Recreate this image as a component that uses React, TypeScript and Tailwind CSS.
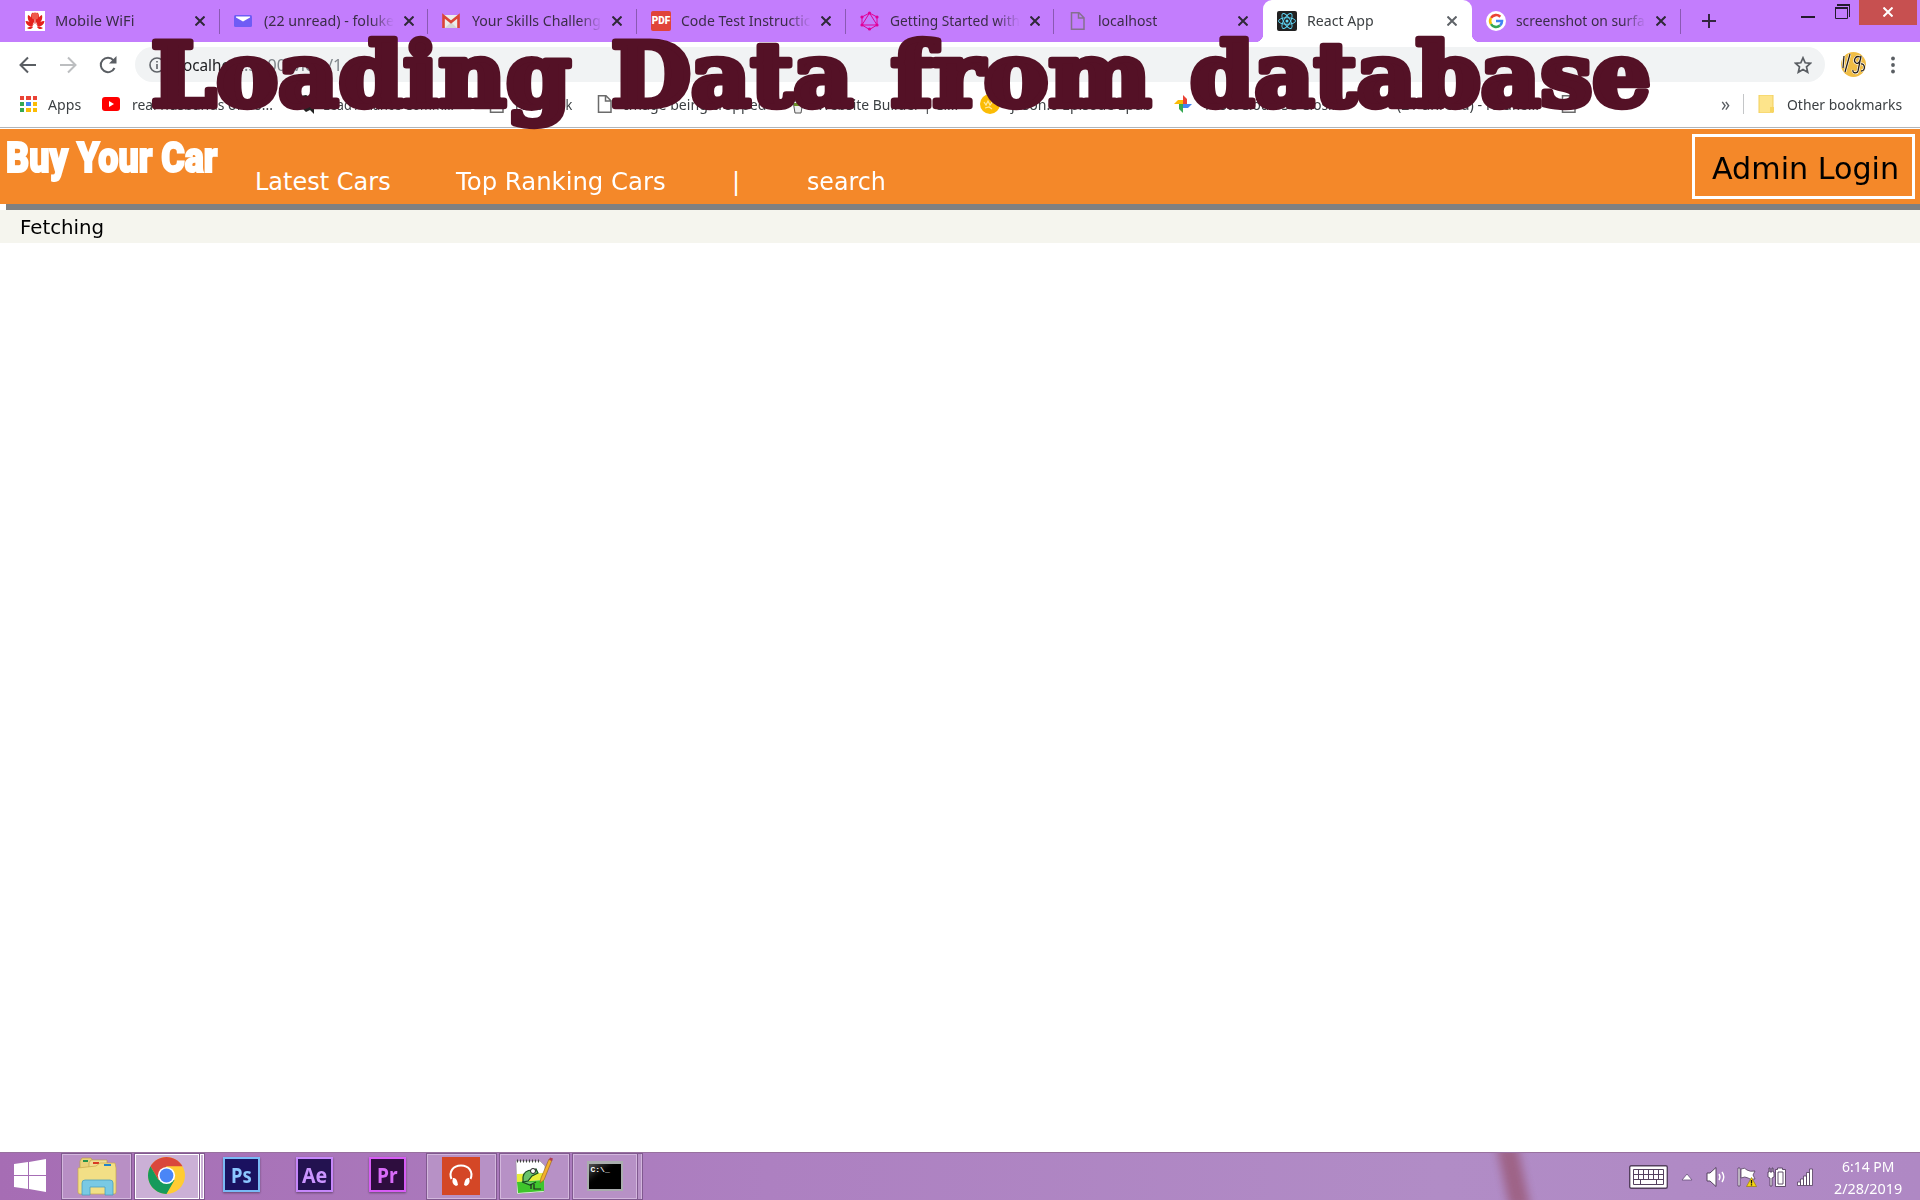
import React, { useLayoutEffect, useRef, useState } from "react";

type FitProps = { w: number; className?: string; children: string };

/* Single-line text stretched to a fixed measure. */
function Fit({ w, className = "", children }: FitProps) {
  const ref = useRef<HTMLSpanElement>(null);
  const [scale, setScale] = useState(1);
  useLayoutEffect(() => {
    if (ref.current) setScale(w / ref.current.offsetWidth);
  }, [w]);
  return (
    <span className="block shrink-0" style={{ width: w }}>
      <span
        ref={ref}
        className={`inline-block origin-left whitespace-pre ${className}`}
        style={{ transform: `scaleX(${scale})` }}
      >
        {children}
      </span>
    </span>
  );
}

const Huawei = () => (
  <svg viewBox="0 0 20 20" className="size-5 bg-white" fill="#e3211c">
    <path d="M9.500 13C6 9 5 5 7 2c2-1 3 3 2.500 11zM10.500 13c3.500-4 4.500-8 2.500-11-2-1-3 3-2.500 11zM8.500 14C4 12 2 8 3 4c3 1 5 5 5.500 10zM11.500 14c4.500-2 6.500-6 5.500-10-3 1-5 5-5.500 10zM8 15c-4 1-7-1-7.500-5C4 10 7 12 8 15zM12 15c4 1 7-1 7.500-5-3.500 0-6.500 2-7.500 5zM8 16c-1 2-4 3-6 1 2-1 4-2 6-1zM12 16c1 2 4 3 6 1-2-1-4-2-6-1z" />
    <ellipse cx="10" cy="5" rx="3.500" ry="3.500" fill="#ee5a4c" />
  </svg>
);
const Mail = () => (
  <svg viewBox="0 0 20 20" className="size-5">
    <rect x="0" y="4" width="18" height="12" rx="1.500" fill="#6f5cf5" />
    <path d="M2 5.500h14v1L9 10.500 2 6.500z" fill="#fff" />
  </svg>
);
const Gmail = () => (
  <svg viewBox="0 0 20 20" className="size-5">
    <path d="M1 4h16v13H1z" fill="#ececec" />
    <path d="M3 17l6-6 6 6z" fill="#d5d5d5" />
    <path d="M1.500 17V5L9 11l7.500-6v12" fill="none" stroke="#db4437" strokeWidth="2.600" />
  </svg>
);
const Pdf = () => (
  <span className="flex size-5 items-center justify-center rounded-[2px] bg-[#e0433a] font-['Roboto'] text-[10px] font-black text-white">
    PDF
  </span>
);
const GraphQL = () => (
  <svg viewBox="0 0 20 20" className="size-5" stroke="#e10098" fill="none" strokeWidth="1">
    <path d="M9.500 2L17 6v8l-7.500 4.500L2 14V6zM9.500 2L17 14H2z" />
    <g fill="#e10098" stroke="none">
      <circle cx="9.500" cy="2" r="1.600" /><circle cx="17" cy="6" r="1.600" /><circle cx="17" cy="14" r="1.600" />
      <circle cx="9.500" cy="18" r="1.600" /><circle cx="2" cy="14" r="1.600" /><circle cx="2" cy="6" r="1.600" />
    </g>
  </svg>
);
const Page = ({ c = "#6b6b6b" }: { c?: string }) => (
  <svg viewBox="0 0 20 20" className="size-5" fill="none" stroke={c} strokeWidth="1.500">
    <path d="M3.500 1.700h7.500l5 5v11.600H3.500zM10.500 2v5H16" />
  </svg>
);
const ReactLogo = () => (
  <svg viewBox="0 0 20 20" className="size-5" fill="none" stroke="#61dafb" strokeWidth=".9">
    <rect width="20" height="20" rx="2" fill="#222" stroke="none" />
    <ellipse cx="10" cy="10" rx="8.500" ry="3.300" />
    <ellipse cx="10" cy="10" rx="8.500" ry="3.300" transform="rotate(60 10 10)" />
    <ellipse cx="10" cy="10" rx="8.500" ry="3.300" transform="rotate(120 10 10)" />
    <circle cx="10" cy="10" r="1.500" fill="#61dafb" stroke="none" />
  </svg>
);
const Google = () => (
  <svg viewBox="0 0 20 20" className="size-5" fill="none" strokeWidth="2.600">
    <circle cx="10" cy="10" r="10" fill="#fff" />
    <path d="M5 6.900A6 6 0 0 1 14.300 5.800" stroke="#ea4335" />
    <path d="M5 13.100A6 6 0 0 1 5 6.900" stroke="#fbbc05" />
    <path d="M14 14.500A6 6 0 0 1 5 13.100" stroke="#34a853" />
    <path d="M10 10h6a6 6 0 0 1-2 4.500" stroke="#4285f4" />
  </svg>
);

const Close = ({ c }: { c: string }) => (
  <svg viewBox="0 0 10 10" className="size-[10px]" stroke={c} strokeWidth="2">
    <path d="M.5 .5l9 9M9.500 .5l-9 9" />
  </svg>
);

const tabs = [
  { icon: <Huawei />, title: "Mobile WiFi", w: 79 },
  { icon: <Mail />, title: "(22 unread) - foluke", w: 130, fade: true },
  { icon: <Gmail />, title: "Your Skills Challeng", w: 129, fade: true },
  { icon: <Pdf />, title: "Code Test Instructic", w: 130, fade: true },
  { icon: <GraphQL />, title: "Getting Started with", w: 130, fade: true },
  { icon: <Page c="#85708f" />, title: "localhost", w: 59 },
  { icon: <ReactLogo />, title: "React App", w: 67, active: true },
  { icon: <Google />, title: "screenshot on surfa", w: 129, fade: true },
];

function TabStrip() {
  return (
    <div className="flex h-[42px] bg-[#c37dfd] pl-[11px]">
      {tabs.map((t, i) => (
        <div
          key={t.title}
          className={`relative flex h-[42px] w-[208.700px] shrink-0 items-center pl-[14px] ${t.active ? "rounded-t-[9px] bg-white" : ""}`}
        >
          {t.icon}
          <div
            className={`ml-[10px] flex w-[130px] pb-[2px] text-[15px] ${t.active ? "text-[#3c4043]" : "text-[#3b2d48]"} ${t.fade ? "[mask-image:linear-gradient(to_right,black_82%,transparent)]" : ""}`}
          >
            <Fit w={t.w}>{t.title}</Fit>
          </div>
          <div className="ml-[10px]">
            <Close c={t.active ? "#5f6368" : "#2f2838"} />
          </div>
          {!t.active && i !== 5 && <div className="absolute right-0 top-[9px] h-[25px] w-px bg-[#8a59b3]" />}
          {t.active && (
            <>
              <div className="absolute -left-[8px] bottom-0 size-2 bg-[radial-gradient(circle_at_0_0,transparent_8px,white_8.500px)]" />
              <div className="absolute -right-[8px] bottom-0 size-2 bg-[radial-gradient(circle_at_100%_0,transparent_8px,white_8.500px)]" />
            </>
          )}
        </div>
      ))}
      <svg viewBox="0 0 14 14" className="ml-[21px] mt-[14px] size-[14px]" stroke="#33263f" strokeWidth="2">
        <path d="M7 0v14M0 7h14" />
      </svg>
      <div className="ml-auto flex">
        <div className="mr-[20px] mt-[16px] h-[2px] w-[14px] bg-[#241a2e]" />
        <svg viewBox="0 0 16 16" className="mr-[8px] mt-[3px] size-4" fill="none" stroke="#241a2e">
          <path d="M.5 4v11.500h12V4M2.500 1.500h12V14" />
          <path d="M0 5h13M2 2h13" strokeWidth="2" />
        </svg>
        <div className="mr-[3px] flex h-[25px] w-[58px] items-center justify-center bg-[#c75050] pb-[2px]">
          <svg viewBox="0 0 10 10" className="size-[10px]" stroke="#fff" strokeWidth="2">
            <path d="M.5 .5l9 9M9.500 .5l-9 9" />
          </svg>
        </div>
      </div>
    </div>
  );
}

function AddressRow() {
  return (
    <div className="flex h-[45px] items-center bg-white pl-[19px]">
      <svg viewBox="0 0 18 18" className="size-[18px]" fill="none" stroke="#5a5e63" strokeWidth="2">
        <path d="M17 9H2M9 1.500L1.500 9 9 16.500" />
      </svg>
      <svg viewBox="0 0 18 18" className="ml-[22px] size-[18px]" fill="none" stroke="#bcbec0" strokeWidth="2">
        <path d="M1 9h15M9 1.500L16.500 9 9 16.500" />
      </svg>
      <svg viewBox="0 0 18 18" className="ml-[22px] size-[18px]" fill="none" stroke="#5a5e63" strokeWidth="2">
        <path d="M15.500 12A7.200 7.200 0 1 1 14.500 4.300" />
        <path d="M17.500 0v7.500H10z" fill="#5a5e63" stroke="none" />
      </svg>
      <div className="ml-[18px] flex h-[35px] w-[1690px] items-center rounded-full bg-[#f1f3f4] pl-[14px] pr-[13px]">
        <svg viewBox="0 0 16 16" className="size-4" fill="none" stroke="#5f6368" strokeWidth="1.600">
          <circle cx="8" cy="8" r="7" />
          <path d="M8 7v5M8 4v1.600" />
        </svg>
        <div className="ml-[14px] flex text-[16px]">
          <Fit w={65} className="text-[#202124]">localhost</Fit>
          <Fit w={99} className="text-[#80868b]">:3000/view/1</Fit>
        </div>
        <svg viewBox="0 0 18 18" className="ml-auto size-[18px]" fill="none" stroke="#5a5e63" strokeWidth="1.700">
          <path d="M9 1.800l2.200 5 5.300.5-4 3.600 1.200 5.300L9 13.400l-4.700 2.800 1.200-5.300-4-3.600 5.300-.5z" />
        </svg>
      </div>
      <svg viewBox="0 0 25 25" className="ml-[16px] size-[25px]">
        <circle cx="12.500" cy="12.500" r="12.500" fill="#f0bd45" />
        <path d="M3 4l-1 12M9 2L4 20M19 5c-5-2-7 4-4 6s5-4 5-7l-3 15c-1 3-6 2-5-1M20 12c4-1 5 7 0 7" fill="none" stroke="#fff" strokeWidth="2.600" />
        <path d="M3 4l-1 12M9 2L4 20M19 5c-5-2-7 4-4 6s5-4 5-7l-3 15c-1 3-6 2-5-1M20 12c4-1 5 7 0 7" fill="none" stroke="#2a2013" strokeWidth="1.300" />
      </svg>
      <svg viewBox="0 0 4 18" className="ml-[25px] h-[18px] w-1" fill="#5a5e63">
        <circle cx="2" cy="2.500" r="1.900" /><circle cx="2" cy="9" r="1.900" /><circle cx="2" cy="15.500" r="1.900" />
      </svg>
    </div>
  );
}

const appColors = ["bg-[#ea4335]", "bg-[#ea4335]", "bg-[#ea4335]", "bg-[#34a853]", "bg-[#4285f4]", "bg-[#fbbc05]", "bg-[#34a853]", "bg-[#fbbc05]", "bg-[#fbbc05]"];

function Bookmarks() {
  return (
    <div className="flex h-[40px] items-center bg-white pb-[6px] pl-[20px] text-[15px] text-[#3c4043]">
      <div className="grid grid-cols-3 gap-[2px]">
        {appColors.map((c, i) => <div key={i} className={`size-[4.300px] ${c}`} />)}
      </div>
      <div className="ml-[11px]"><Fit w={33}>Apps</Fit></div>
      <svg viewBox="0 0 18 14" className="ml-[21px] h-[14px] w-[18px]">
        <rect width="18" height="14" rx="3" fill="#f00" /><path d="M7 4l5 3-5 3z" fill="#fff" />
      </svg>
      <div className="ml-[12px]"><Fit w={141}>real husbands of ho...</Fit></div>
      <svg viewBox="0 0 20 20" className="ml-[25px] size-5" fill="#222"><path d="M2 2l6-1 6 3 2 6 0 10-4-4-4 2-3-3-4-1 3-3z" /></svg>
      <div className="ml-[5px]"><Fit w={131}>Lead Alliance Comm...</Fit></div>
      <div className="ml-[33px]"><Page /></div>
      <div className="ml-[8px]"><Fit w={57}>Facebook</Fit></div>
      <div className="ml-[23px]"><Page /></div>
      <div className="ml-[9px]"><Fit w={142}>Image being cropped</Fit></div>
      <svg viewBox="0 0 20 20" className="ml-[22px] size-5">
        <path d="M8 0h6v6H8z" fill="#f3a35b" /><path d="M5 7h10l-2 12H7z" fill="#eee" stroke="#555" /><path d="M6 9h8v3H6z" fill="#6b8f2a" />
      </svg>
      <div className="ml-[9px]"><Fit w={141}>Website Builder | Cr...</Fit></div>
      <svg viewBox="0 0 20 20" className="ml-[22px] size-5">
        <circle cx="10" cy="10" r="10" fill="#fbbc05" /><path d="M4 8l2 3 2-4 2 4 3-4 3 3M5 14l4-1 3 2" fill="none" stroke="#ffe9a0" strokeWidth="1.200" />
      </svg>
      <div className="ml-[11px]"><Fit w={141}>jason.0 Episode Epub</Fit></div>
      <svg viewBox="0 0 20 20" className="ml-[21px] size-5">
        <path d="M10 10V1l4 4v5z" fill="#ea4335" /><path d="M10 10h9l-4 4h-5z" fill="#4285f4" />
        <path d="M10 10v9l-4-4v-5z" fill="#34a853" /><path d="M10 10H1l4-4h5z" fill="#fbbc05" />
      </svg>
      <div className="ml-[12px]"><Fit w={138}>ProtoCloud SC Closi...</Fit></div>
      <svg viewBox="0 0 20 20" className="ml-[23px] size-5"><rect x="1" y="4" width="18" height="8" rx="2" fill="#6f5cf5" /></svg>
      <div className="ml-[11px]"><Fit w={142}>(21 unread) - foluke...</Fit></div>
      <div className="ml-[20px]"><Page /></div>
      <div className="ml-auto text-[20px] leading-none text-[#5a5e63]"><Fit w={9}>»</Fit></div>
      <div className="ml-[13px] h-5 w-px bg-[#c4c6c8]" />
      <svg viewBox="0 0 16 18" className="ml-[14px] h-[18px] w-4"><path d="M1 0h14v18H1z" fill="#fde48b" stroke="#f2cf5b" /><path d="M12 12h4v5h-4z" fill="#f7d560" /></svg>
      <div className="ml-[13px] mr-[18px]"><Fit w={115}>Other bookmarks</Fit></div>
    </div>
  );
}

const words = [
  { text: "Loading", x: 151, w: 420 },
  { text: "Data", x: 611, w: 242 },
  { text: "from", x: 891, w: 260 },
  { text: "database", x: 1190, w: 461 },
];

/* Slab lettering; the rounded outline softens the serifs. */
function Headline() {
  return (
    <svg
      viewBox="0 0 1920 140"
      className="pointer-events-none absolute left-0 top-0 h-[140px] w-[1920px] font-['DejaVu_Serif'] text-[88px] font-bold"
      fill="#541126"
      stroke="#541126"
      strokeWidth="6.500"
      strokeLinejoin="round"
    >
      {words.map((k) => (
        <text key={k.text} x={k.x} y="106" textLength={k.w} lengthAdjust="spacingAndGlyphs">
          {k.text}
        </text>
      ))}
    </svg>
  );
}

function SiteHeader() {
  return (
    <header className="font-['DejaVu_Sans']">
      <div className="flex h-[75px] bg-[#f48829]">
        <div className="ml-[6px] h-[50px] font-['Roboto'] text-[43px] font-black leading-[56px] text-white [-webkit-text-stroke:2px_white]">
          <Fit w={211}>Buy Your Car</Fit>
        </div>
        <nav className="flex pt-[38px] text-[24px] leading-[30px] text-white">
          <div className="ml-[38px]"><Fit w={136}>Latest Cars</Fit></div>
          <div className="ml-[65px]"><Fit w={210}>Top Ranking Cars</Fit></div>
          <div className="ml-[66px]"><Fit w={8}>|</Fit></div>
          <div className="ml-[67px]"><Fit w={79}>search</Fit></div>
        </nav>
        <button className="ml-auto mr-[5px] mt-[5px] flex h-[65px] w-[223px] items-center justify-center border-[3px] border-white pl-[4px] pt-[4px] text-[30px] text-black">
          <Fit w={187}>Admin Login</Fit>
        </button>
      </div>
      <div className="ml-[6px] h-[6px] bg-[#808080]" />
      <div className="h-[33px] bg-[#f5f5ee] pl-[20px] pt-px text-[20px] leading-[33px] text-black">
        <Fit w={84}>Fetching</Fit>
      </div>
    </header>
  );
}

const Adobe = ({ text, box }: { text: string; box: string }) => (
  <div className={`mt-[4px] flex h-[35px] w-[37px] shrink-0 items-center justify-center border-2 pb-[2px] text-[22px] font-bold shadow-[0_1px_2px_#0006] ${box}`}>
    <Fit w={text === "Ae" ? 25 : 21}>{text}</Fit>
  </div>
);

const taskBox = "flex h-[47px] shrink-0 justify-center border border-[#80598f] shadow-[inset_0_0_0_1px_#d3b7dd]";

function Taskbar() {
  return (
    <footer className="relative mt-auto flex h-12 overflow-hidden border-t border-[#98719f] bg-[linear-gradient(90deg,#a66db4,#ad80c1_40%,#b18cc6_75%,#af88c4)] text-white">
      <div className="absolute -top-2 left-[1503px] h-16 w-[21px] skew-x-[12deg] bg-[#9c5f80] opacity-90 blur-[5px]" />
      <svg viewBox="0 0 34 34" className="ml-[13px] mt-[6px] size-[34px] shrink-0" fill="#fff">
        <path d="M1 5l14-2v13H1zM16 3l17-3v16H16zM1 17h14v13L1 28zM16 17h17v16l-17-3z" />
      </svg>
      <div className={`ml-[14px] w-[71px] bg-[#b88fc5] ${taskBox}`}>
        <svg viewBox="0 0 40 40" className="mt-[3px] size-10">
          <path d="M3 4l2-3h9l2 3h7v10H3z" fill="#e9d27a" stroke="#b79a3c" strokeWidth=".6" /><path d="M12 6l2-3h16v12H12z" fill="#f0dc92" stroke="#b79a3c" strokeWidth=".6" />
          <path d="M6 3h5v2H6z" fill="#25934b" /><path d="M16 5h6v2h-6z" fill="#d93a23" />
          <path d="M1 11l18-2 4-3h15l1 5v24q0 2-2 2H3q-2 0-2-2z" fill="#f2df86" stroke="#c8a84c" strokeWidth=".7" /><path d="M27 7h7v2h-7z" fill="#2484c8" />
          <path d="M5 38V26q0-3 3-3h25q3 0 3 3v12h-8v-8H13v8z" fill="#79c9e4" stroke="#4c9fbe" strokeWidth=".8" />
        </svg>
      </div>
      <div className="ml-[2px] flex h-[47px] w-[66px] shrink-0 justify-center border border-[#80598f] bg-[#cbb0d6] shadow-[inset_0_0_0_1px_white]">
        <svg viewBox="0 0 37 37" className="mt-[3px] mr-px size-[37px]">
          <circle cx="18.500" cy="18.500" r="18.500" fill="#fc3" />
          <path d="M2.480 9.250A18.500 18.500 0 0 1 34.500 9.250H18.500L10.500 23z" fill="#d9473c" />
          <path d="M2.480 9.250A18.500 18.500 0 0 0 18.500 37L26.500 23.100 10.500 23.100z" fill="#159a5b" />
          <circle cx="18.500" cy="18.500" r="8.600" fill="#fff" /><circle cx="18.500" cy="18.500" r="6.900" fill="#4a86f7" />
        </svg>
      </div>
      <div className="h-[47px] w-[5px] shrink-0 border border-l-0 border-[#80598f] bg-[#cbb0d6] shadow-[inset_0_0_0_1px_white]" />
      <div className="ml-[18px] flex gap-[36px]">
        <Adobe text="Ps" box="border-[#79b9f5] bg-[#1a1160] text-[#8cc6ff]" />
        <Adobe text="Ae" box="border-[#c687fb] bg-[#231250] text-[#cb95ff]" />
        <Adobe text="Pr" box="border-[#d75cf5] bg-[#2e0d3e] text-[#d86bf8]" />
      </div>
      <div className={`ml-[20px] w-[71px] bg-[#b791c6] ${taskBox}`}>
        <svg viewBox="0 0 38 38" className="mt-[3px] mr-px size-[38px]">
          <path d="M0 0h38v38H0z" fill="#d44726" />
          <path d="M9.500 22C6.500 15 11 8.500 19 8.500S31.500 15 28.500 22" fill="none" stroke="#fff" strokeWidth="2" />
          <path d="M11 21q4-1 5 7l-2 1q-5-2-3-8zM27 21q-4-1-5 7l2 1q5-2 3-8z" fill="#fff" />
        </svg>
      </div>
      <div className={`ml-[2px] w-[71px] bg-[#b791c6] ${taskBox}`}>
        <svg viewBox="0 0 40 38" className="mt-[3px] mr-[2px] h-[38px] w-10">
          <path d="M2 4h24l5 5-1 26-27 2z" fill="#fff" stroke="#999" strokeWidth=".6" />
          <path d="M3 17l27-1v7L3 25z" fill="#e8ee3a" /><path d="M3 25l27-2v11L4 36z" fill="#3fc52c" />
          <path d="M3 4h22" stroke="#444" strokeWidth="3" strokeDasharray="1 2" />
          <path d="M9 20c1-6 6-7 9-7l4-1 2 4-6 3-4 5-5 1zM8 25l8 3 6-3" fill="#68c36a" stroke="#194d20" strokeWidth="1.200" />
          <circle cx="19" cy="14" r="2.500" fill="#fff" stroke="#222" /><path d="M17 27v5M20 27v5h7" stroke="#222" strokeWidth="1.200" fill="none" />
          <path d="M26 26l1-5 8-19 3 1-8 20z" fill="#f2b02d" stroke="#90601a" strokeWidth=".6" /><path d="M35 3l1-2.500 3 1-1 2.500z" fill="#b23f4f" />
        </svg>
      </div>
      <div className={`ml-[2px] w-[66px] bg-[#b791c6] ${taskBox}`}>
        <div className="mr-px mt-[7px] h-[30px] w-[36px] border-2 border-t-[3px] border-[#a9adae] bg-gradient-to-br from-[#555] via-black to-black pl-[2px] font-['Liberation_Mono'] text-[8px] font-bold leading-[12px]">
          C:\_
        </div>
      </div>
      <div className="h-[47px] w-[5px] shrink-0 border border-l-0 border-[#80598f] bg-[#b791c6] shadow-[inset_-1px_0_0_#d3b7dd]" />
      <div className="ml-auto flex">
        <svg viewBox="0 0 39 24" className="mt-[12px] h-6 w-[39px]" fill="none" stroke="#54405e">
          <rect x=".7" y=".7" width="37.600" height="22.600" rx="1.500" fill="#fff" strokeWidth="1.400" />
          <path d="M4.500 4.500h30v15h-30zM4.500 9.500h30M4.500 14.500h30M9.500 4.500v10M14.500 4.500v10M19.500 4.500v10M24.500 4.500v10M29.500 4.500v10M11.500 14.500v5M27.500 14.500v5" />
        </svg>
        <svg viewBox="0 0 12 8" className="ml-[13px] mt-[20px] h-2 w-3"><path d="M1 7l5-6 5 6z" fill="#fff" stroke="#67517a" strokeWidth=".8" /></svg>
        <svg viewBox="0 0 22 20" className="ml-[13px] mt-[14px] h-5 w-[22px]" fill="none">
          <path d="M1 6h3l6-5.500v19L4 14H1z" fill="#fff" stroke="#54405e" /><path d="M13 7q2 3 0 6M16 5q3.500 5 0 10" stroke="#fff" strokeWidth="1.400" />
        </svg>
        <svg viewBox="0 0 20 20" className="ml-[9px] mt-[14px] size-5">
          <path d="M1 1h2v18H1zM4 2q4-2 6 1 3 2 8 1l-2 4 2 4q-5 1-7-1-3-2-7 0z" fill="#fff" stroke="#54405e" strokeWidth=".8" />
          <path d="M14.500 10.500l5 9h-10z" fill="#f5d511" stroke="#8d7300" strokeWidth=".6" /><path d="M14.500 13v3.500M14.500 17.300v1.200" stroke="#111" strokeWidth="1.300" />
        </svg>
        <svg viewBox="0 0 20 20" className="ml-[10px] mt-[14px] size-5" fill="#fff" stroke="#54405e" strokeWidth=".9">
          <path d="M2 1v4H1v5l2 1v8h2v-8l2-1V5H6V1H5v4H3V1z" /><path d="M8.500 2.500h2V1h5v1.500h3v17h-10z" /><path d="M11 5h5v12h-5z" fill="#fff" />
        </svg>
        <svg viewBox="0 0 17 18" className="ml-[10px] mt-[15px] h-[18px] w-[17px]" fill="#fff" stroke="#54405e" strokeWidth=".8">
          <path d="M.5 14h3v3.500h-3zM3.500 11h3v6.500h-3zM6.500 8h3v9.500h-3zM9.500 4.500h3v13h-3zM12.500 1h3v16.500h-3z" />
        </svg>
        <div className="ml-[19px] mr-[18px] mt-[2px] flex w-[69px] flex-col items-center text-[15px] leading-[22px] text-white">
          <Fit w={52}>6:14 PM</Fit>
          <Fit w={68}>2/28/2019</Fit>
        </div>
      </div>
    </footer>
  );
}

export default function App() {
  return (
    <div className="relative flex h-[1200px] w-[1920px] flex-col overflow-hidden bg-white font-['Noto_Sans',sans-serif] leading-[20px]">
      <TabStrip />
      <AddressRow />
      <Bookmarks />
      <div className="h-[2px] border-t border-[#b2b5b9] bg-white" />
      <SiteHeader />
      <Taskbar />
      <Headline />
    </div>
  );
}
